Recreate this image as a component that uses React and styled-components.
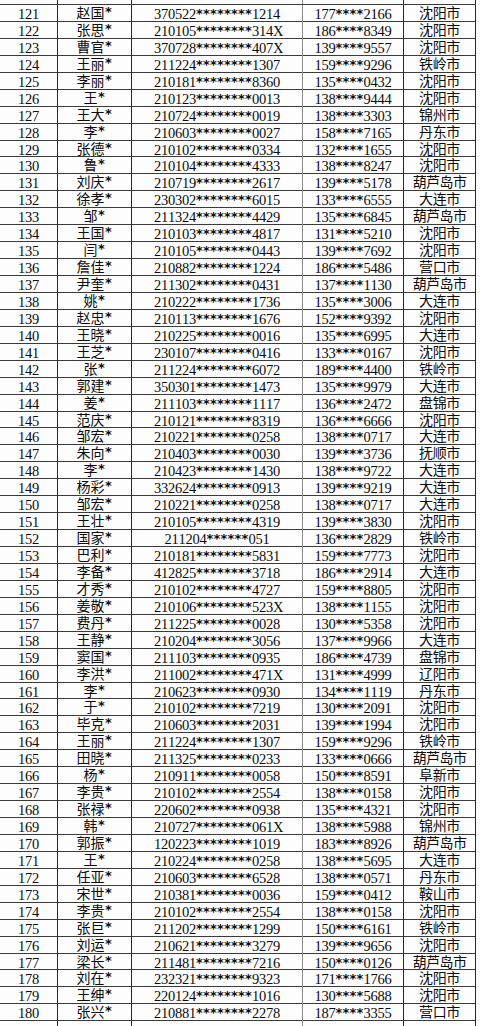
import React from "react";
import styled, { createGlobalStyle } from "styled-components";

const GlobalStyle = createGlobalStyle`
  html, body { margin: 0; padding: 0; background: #fdfdfd; }
  body { width: 480px; overflow: hidden; }
`;

const raw = `121 赵国* 370522********1214 177****2166 沈阳市
122 张思* 210105********314X 186****8349 沈阳市
123 曹官* 370728********407X 139****9557 沈阳市
124 王丽* 211224********1307 159****9296 铁岭市
125 李丽* 210181********8360 135****0432 沈阳市
126 王* 210123********0013 138****9444 沈阳市
127 王大* 210724********0019 138****3303 锦州市
128 李* 210603********0027 158****7165 丹东市
129 张德* 210102********0334 132****1655 沈阳市
130 鲁* 210104********4333 138****8247 沈阳市
131 刘庆* 210719********2617 139****5178 葫芦岛市
132 徐孝* 230302********6015 133****6555 大连市
133 邹* 211324********4429 135****6845 葫芦岛市
134 王国* 210103********4817 131****5210 沈阳市
135 闫* 210105********0443 139****7692 沈阳市
136 詹佳* 210882********1224 186****5486 营口市
137 尹奎* 211302********0431 137****1130 葫芦岛市
138 姚* 210222********1736 135****3006 大连市
139 赵忠* 210113********1676 152****9392 沈阳市
140 王晓* 210225********0016 135****6995 大连市
141 王芝* 230107********0416 133****0167 沈阳市
142 张* 211224********6072 189****4400 铁岭市
143 郭建* 350301********1473 135****9979 大连市
144 姜* 211103********1117 136****2472 盘锦市
145 范庆* 210121********8319 136****6666 沈阳市
146 邹宏* 210221********0258 138****0717 大连市
147 朱向* 210403********0030 139****3736 抚顺市
148 李* 210423********1430 138****9722 大连市
149 杨彩* 332624********0913 139****9219 大连市
150 邹宏* 210221********0258 138****0717 大连市
151 王壮* 210105********4319 139****3830 沈阳市
152 国家* 211204******051 136****2829 铁岭市
153 巴利* 210181********5831 159****7773 沈阳市
154 李备* 412825********3718 186****2914 大连市
155 才秀* 210102********4727 159****8805 沈阳市
156 姜敬* 210106********523X 138****1155 沈阳市
157 费丹* 211225********0028 130****5358 沈阳市
158 王静* 210204********3056 137****9966 大连市
159 窦国* 211103********0935 186****4739 盘锦市
160 李洪* 211002********471X 131****4999 辽阳市
161 李* 210623********0930 134****1119 丹东市
162 于* 210102********7219 130****2091 沈阳市
163 毕克* 210603********2031 139****1994 沈阳市
164 王丽* 211224********1307 159****9296 铁岭市
165 田晓* 211325********0233 133****0666 葫芦岛市
166 杨* 210911********0058 150****8591 阜新市
167 李贵* 210102********2554 138****0158 沈阳市
168 张禄* 220602********0938 135****4321 沈阳市
169 韩* 210727********061X 138****5988 锦州市
170 郭振* 120223********1019 183****8926 葫芦岛市
171 王* 210224********0258 138****5695 大连市
172 任亚* 210603********6528 138****0571 丹东市
173 宋世* 210381********0036 159****0412 鞍山市
174 李贵* 210102********2554 138****0158 沈阳市
175 张巨* 211202********1299 150****6161 铁岭市
176 刘运* 210621********3279 139****9656 沈阳市
177 梁长* 211481********7216 150****0126 葫芦岛市
178 刘在* 232321********9323 171****1766 沈阳市
179 王绅* 220124********1016 130****5688 沈阳市
180 张兴* 210881********2278 187****3355 营口市`;

const rows = raw.split("\n").map((line) => {
  const [no, name, id, phone, city] = line.trim().split(/\s+/);
  return { no, name, id, phone, city };
});

const Sheet = styled.div`
  display: flex;
  flex-direction: column;
  width: 476px;
  color: #0c0c0c;
`;

const Row = styled.div`
  display: grid;
  grid-template-columns: 58px 74px 171px 101px 72px;
  height: ${(p) => p.$h || "16.95px"};
  border-bottom: 1px solid #3a3a3a;
  box-sizing: border-box;
  overflow: ${(p) => (p.$edge ? "hidden" : "visible")};
`;

const Cell = styled.div`
  display: flex;
  align-items: center;
  justify-content: center;
  border-right: 1px solid ${(p) => (p.$light ? "#8a8a8a" : "#2a2a2a")};
  box-sizing: border-box;
  white-space: nowrap;
  font-size: ${(p) => (p.$cjk ? "14px" : "14.5px")};
  line-height: 14px;
  padding-bottom: ${(p) => (p.$cjk ? "3px" : "0")};
  padding-top: ${(p) => (p.$cjk ? "0" : "1px")};
  font-family: ${(p) =>
    p.$cjk
      ? `"Noto Sans CJK SC", "Liberation Serif", serif`
      : `"Liberation Serif", "Noto Sans CJK SC", serif`};
  letter-spacing: ${(p) => p.$sp || "0"};
`;

const Num = styled.span`
  display: inline-block;
  width: 7px;
  text-align: center;
`;

const Star = styled.span`
  display: inline-block;
  width: ${(p) => p.$w || "7px"};
  text-align: center;
  font-family: "DejaVu Sans", sans-serif;
  font-size: 13px;
  font-weight: 700;
  vertical-align: ${(p) => p.$v || "-3px"};
  line-height: 10px;
  letter-spacing: 0;
`;

function Masked({ text }) {
  return (
    <>
      {text.split("").map((ch, i) =>
        ch === "*" ? <Star key={i}>*</Star> : <Num key={i}>{ch}</Num>
      )}
    </>
  );
}

function Name({ text }) {
  const base = text.replace(/\*$/, "");
  return (
    <>
      {base}
      <Star $w="8px" $v="-2px">*</Star>
    </>
  );
}

export default function App() {
  return (
    <>
      <GlobalStyle />
      <Sheet>
        <Row $h="5px" $edge>
          <Cell />
          <Cell />
          <Cell $light />
          <Cell />
          <Cell />
        </Row>
        {rows.map((r) => (
          <Row key={r.no}>
            <Cell>
              <Masked text={r.no} />
            </Cell>
            <Cell $cjk>
              <Name text={r.name} />
            </Cell>
            <Cell $light>
              <Masked text={r.id} />
            </Cell>
            <Cell>
              <Masked text={r.phone} />
            </Cell>
            <Cell $cjk $sp={r.city.length > 3 ? "-0.6px" : "-0.3px"}>
              {r.city}
            </Cell>
          </Row>
        ))}
        <Row $h="6px" $edge>
          <Cell />
          <Cell />
          <Cell $light />
          <Cell />
          <Cell />
        </Row>
      </Sheet>
    </>
  );
}
